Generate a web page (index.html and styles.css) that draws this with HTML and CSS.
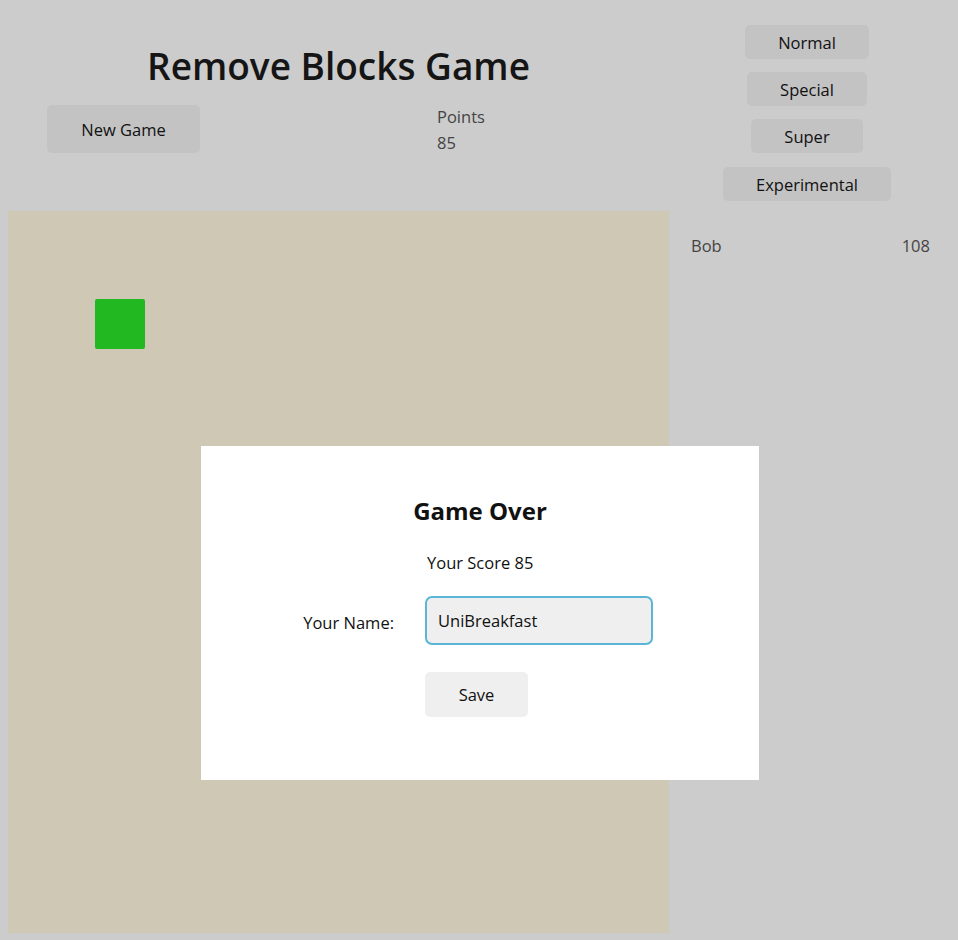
FILE: index.html
```html
<!DOCTYPE html>
<html>
<head>
<meta charset="utf-8">
<link rel="stylesheet" href="styles.css">
<title>Remove Blocks Game</title>
</head>
<body>
<div class="app">
  <div class="main">
    <div class="top">
      <h1 class="title">Remove Blocks Game</h1>
      <div class="controls">
        <button class="btn new-game">New Game</button>
        <div class="points">
          <div>Points</div>
          <div>85</div>
        </div>
      </div>
    </div>
    <div class="board">
      <div class="block"></div>
    </div>
  </div>
  <div class="side">
    <div class="modes">
      <button class="btn mode">Normal</button>
      <button class="btn mode">Special</button>
      <button class="btn mode">Super</button>
      <button class="btn mode">Experimental</button>
    </div>
    <div class="leaders">
      <div class="leader"><span>Bob</span><span>108</span></div>
    </div>
  </div>
</div>
<div class="modal">
  <h2 class="modal-title">Game Over</h2>
  <div class="form">
    <div></div>
    <div class="score">Your Score 85</div>
    <label class="label" for="name">Your Name:</label>
    <input class="name-input" id="name" type="text" value="UniBreakfast">
    <div></div>
    <div><button class="save">Save</button></div>
  </div>
</div>
</body>
</html>
```
FILE: styles.css
```css
html, body {
  margin: 0;
  padding: 0;
  background: #cccccc;
  font-family: "Open Sans", "Noto Sans", sans-serif;
  font-size: 16.5px;
  color: #444;
}
.app {
  display: flex;
  padding-left: 8px;
}
.main {
  width: 661px;
  flex: none;
}
.top {
  height: 211px;
  box-sizing: border-box;
  padding-top: 40px;
}
.title {
  margin: 0;
  text-align: center;
  font-size: 37px;
  line-height: 52px;
  font-weight: 600;
  color: #151515;
}
.controls {
  display: flex;
  align-items: flex-start;
  margin-top: 13px;
  padding-left: 39px;
}
.btn {
  font-family: inherit;
  font-size: 16.5px;
  color: #111;
  background: #c3c3c3;
  border: none;
  border-radius: 5px;
  cursor: pointer;
}
.new-game {
  width: 153px;
  height: 48px;
  padding-top: 2px;
}
.points {
  margin-left: 237px;
  margin-top: -1px;
  line-height: 25.5px;
  color: #444;
}
.board {
  height: 722px;
  background: #cec8b4;
  padding: 88px 0 0 87px;
  box-sizing: border-box;
}
.block {
  width: 50px;
  height: 50px;
  background: #21b821;
  border-radius: 2px;
}
.side {
  flex: 1;
  display: flex;
  flex-direction: column;
}
.modes {
  display: flex;
  flex-direction: column;
  align-items: center;
  gap: 13px;
  padding-top: 25px;
  margin-right: 13px;
}
.mode {
  height: 34px;
  padding: 1px 33px 0;
}
.mode:last-child {
  margin-top: 1px;
}
.leaders {
  margin-top: 32px;
  padding: 0 28px 0 22px;
}
.leader {
  display: flex;
  justify-content: space-between;
  line-height: 26px;
}
.modal {
  position: absolute;
  left: 201px;
  top: 446px;
  width: 558px;
  height: 334px;
  background: #fff;
  color: #111;
  box-sizing: border-box;
  padding-top: 49px;
}
.modal-title {
  margin: 0;
  text-align: center;
  font-size: 24px;
  line-height: 32px;
  font-weight: 700;
}
.form {
  display: grid;
  grid-template-columns: 193px 1fr;
  column-gap: 31px;
  align-items: center;
  margin-top: 24px;
}
.score {
  line-height: 24px;
  padding-left: 2px;
  margin-bottom: 21px;
}
.label {
  text-align: right;
  line-height: 24px;
  padding-top: 5px;
}
.name-input {
  width: 228px;
  height: 49px;
  box-sizing: border-box;
  border: 2px solid #5ab6d6;
  border-radius: 7px;
  background: #efefef;
  font-family: inherit;
  font-size: 16.5px;
  color: #111;
  padding: 0 11px;
  outline: none;
}
.save {
  margin-top: 27px;
  width: 103px;
  height: 45px;
  border: none;
  border-radius: 5px;
  background: #efefef;
  font-family: inherit;
  font-size: 16.5px;
  color: #111;
}
```
